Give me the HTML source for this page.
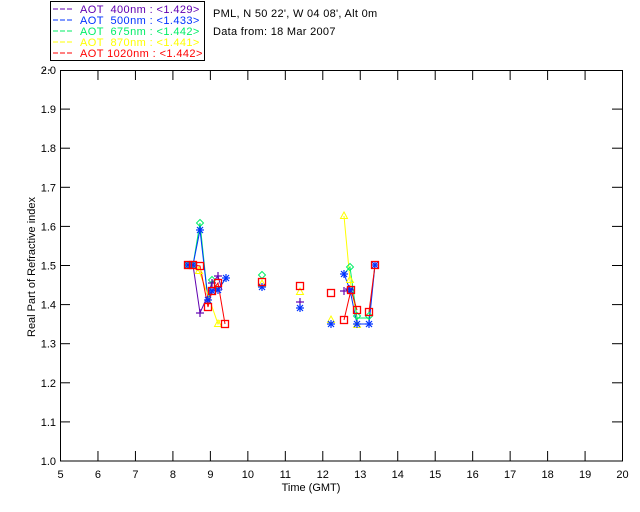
<!DOCTYPE html>
<html><head><style>
html,body{margin:0;padding:0;background:#fff;width:640px;height:512px;overflow:hidden}
svg text{font-family:"Liberation Sans",sans-serif;font-size:11px;white-space:pre}
</style></head><body>
<svg width="640" height="512" xmlns="http://www.w3.org/2000/svg">
<rect x="50.5" y="1.5" width="154" height="59" fill="#fff" stroke="#000"/>
<g font-size="11" letter-spacing="0.4">
<line x1="53" y1="9" x2="74" y2="9" stroke="#6000b0" stroke-dasharray="5,2"/><text x="80" y="13" fill="#6000b0">AOT  400nm : &lt;1.429&gt;</text>
<line x1="53" y1="20" x2="74" y2="20" stroke="#0033ff" stroke-dasharray="5,2"/><text x="80" y="24" fill="#0033ff">AOT  500nm : &lt;1.433&gt;</text>
<line x1="53" y1="31" x2="74" y2="31" stroke="#00ee66" stroke-dasharray="5,2"/><text x="80" y="35" fill="#00ee66">AOT  675nm : &lt;1.442&gt;</text>
<line x1="53" y1="42" x2="74" y2="42" stroke="#ffff00" stroke-dasharray="5,2"/><text x="80" y="46" fill="#ffff00">AOT  870nm : &lt;1.441&gt;</text>
<line x1="53" y1="53" x2="74" y2="53" stroke="#ff0000" stroke-dasharray="5,2"/><text x="80" y="57" fill="#ff0000">AOT 1020nm : &lt;1.442&gt;</text>
</g>
<text x="213" y="17" letter-spacing="0.3">PML, N 50 22', W 04 08', Alt 0m</text>
<text x="213" y="35" letter-spacing="0.3">Data from: 18 Mar 2007</text>
<line x1="43" y1="70" x2="46" y2="70" stroke="#000"/><line x1="48" y1="70" x2="51" y2="70" stroke="#000"/>
<rect x="60.5" y="70.5" width="562" height="390.5" fill="none" stroke="#000"/>
<g stroke="#000" id="ticks"></g>
<g id="lbl"></g>
<text x="311" y="491" text-anchor="middle">Time (GMT)</text>
<text transform="translate(35,267) rotate(-90)" text-anchor="middle" font-size="10.5">Real Part of Refractive index</text>
<g id="data"></g>
</svg>
<script>
var ns="http://www.w3.org/2000/svg",s=document.querySelector('svg');
function el(t,a,p){var e=document.createElementNS(ns,t);for(var k in a)e.setAttribute(k,a[k]);(p||s).appendChild(e);return e}
var T=document.getElementById('ticks'),L=document.getElementById('lbl');
for(var i=0;i<=15;i++){var x=60.5+i*37.47;
 if(i>0&&i<15){el('line',{x1:x,y1:461,x2:x,y2:451},T);el('line',{x1:x,y1:70,x2:x,y2:80},T);}
 var t=el('text',{x:x,y:478,'text-anchor':'middle'},L);t.textContent=5+i;}
for(var j=0;j<=10;j++){var y=461-j*39.1;
 if(j>0&&j<10){el('line',{x1:60,y1:y,x2:70,y2:y},T);el('line',{x1:622,y1:y,x2:612,y2:y},T);}
 var t=el('text',{x:56,y:y+4,'text-anchor':'end'},L);t.textContent=(1+j/10).toFixed(1);}
var D=document.getElementById('data');
function pl(c,pts){el('polyline',{points:pts.map(p=>p.join(',')).join(' '),fill:'none',stroke:c,'stroke-width':1},D)}
var P='#6000b0',B='#0033ff',G='#00ee66',Y='#ffff00',R='#ff0000';
pl(G,[[188,265],[193,265],[200,223],[208,300],[212,280],[218,290],[226,278]]);
pl(B,[[188,265],[193,265],[200,230],[208,300],[212,291],[218,290],[226,278]]);
pl(P,[[188,265],[193,265],[200,313],[208,295],[212,283],[218,276],[222,290]]);
pl(Y,[[188,265],[199,271],[208,295],[218,324],[220,320]]);
pl(R,[[188,265],[193,265],[200,266],[208,307],[212,291],[218,283],[225,324]]);
pl(Y,[[344,216],[350,280],[357,318],[357,325]]);
pl(G,[[344,274],[350,267],[357,318],[369,318],[375,265]]);
pl(B,[[344,274],[350,290],[357,324],[369,324],[375,265]]);
pl(R,[[344,320],[351,290],[357,310]]);pl(R,[[369,312],[375,265]]);
function sq(x,y){el('rect',{x:x-3.5,y:y-3.5,width:7,height:7,fill:'none',stroke:R,'stroke-width':1.3},D)}
function ast(x,y){var g=el('g',{stroke:B,'stroke-width':1.2},D);el('line',{x1:x-4,y1:y,x2:x+4,y2:y},g);el('line',{x1:x,y1:y-4,x2:x,y2:y+4},g);el('line',{x1:x-3,y1:y-3,x2:x+3,y2:y+3},g);el('line',{x1:x-3,y1:y+3,x2:x+3,y2:y-3},g)}
function plus(x,y){var g=el('g',{stroke:P,'stroke-width':1.2},D);el('line',{x1:x-4,y1:y,x2:x+4,y2:y},g);el('line',{x1:x,y1:y-4,x2:x,y2:y+4},g)}
function dia(x,y){el('polygon',{points:[x,y-3.5,x+3.5,y,x,y+3.5,x-3.5,y].join(' '),fill:'none',stroke:G},D)}
function tri(x,y){el('polygon',{points:[x,y-4,x+3.5,y+2.5,x-3.5,y+2.5].join(' '),fill:'none',stroke:Y},D)}
[[200,223],[212,280],[262,275],[350,267],[357,316],[369,316],[188,265],[193,265]].forEach(p=>dia(...p));
[[344,216],[218,324],[199,271],[300,292],[331,320],[350,280],[357,325],[262,284]].forEach(p=>tri(...p));
[[200,313],[218,276],[212,283],[300,302],[344,291],[349,289]].forEach(p=>plus(...p));
[[200,230],[208,300],[212,291],[218,290],[226,278],[262,287],[300,308],[331,324],[344,274],[350,290],[357,324],[369,324],[375,265],[188,265],[193,265]].forEach(p=>ast(...p));
[[188,265],[193,265],[200,266],[212,291],[208,307],[218,283],[225,324],[262,282],[300,286],[331,293],[344,320],[351,290],[357,310],[369,312],[375,265]].forEach(p=>sq(...p));
</script>
</body></html>
